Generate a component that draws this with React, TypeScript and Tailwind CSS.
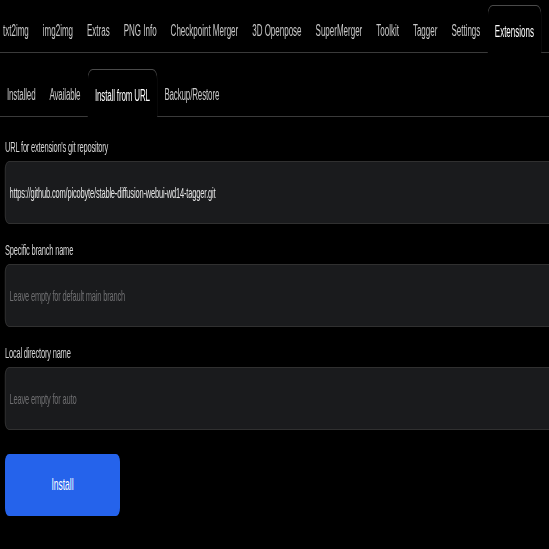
import { useState } from "react";

const TOP_TABS = ["txt2img", "img2img", "Extras", "PNG Info", "Checkpoint Merger", "3D Openpose", "SuperMerger", "Toolkit", "Tagger", "Settings", "Extensions"];
const SUB_TABS = ["Installed", "Available", "Install from URL", "Backup/Restore"];

const TabBar = ({ tabs, active, onPick, className, text }: { tabs: string[]; active: string; onPick: (t: string) => void; className?: string; text: string }) => (
  <div className={`flex border-b border-[#3a3a3a] ${className ?? ""}`}>
    {tabs.map((t) =>
      t === active ? (
        <button key={t} onClick={() => onPick(t)} className={`-mb-px px-[14px] h-[48px] pt-[4px] rounded-t-[10px] border border-b-0 border-[#4a4a4a] bg-black text-white leading-5 whitespace-nowrap ${text}`}>
          {t}
        </button>
      ) : (
        <button key={t} onClick={() => onPick(t)} className={`px-[14px] h-[47px] pt-[4px] text-[#c8c8c8] leading-5 whitespace-nowrap ${text}`}>
          {t}
        </button>
      )
    )}
  </div>
);

const Field = ({ label, value, placeholder }: { label: string; value?: string; placeholder: string }) => (
  <label className="block">
    <span className="block px-[10px] mb-1 text-[15px] tracking-[-0.4px] leading-5 text-[#d4d4d4]">{label}</span>
    <input
      defaultValue={value}
      placeholder={placeholder}
      className="block ml-[10px] w-[1130px] h-[63px] px-2 rounded-lg border border-[#3c3c3c] bg-[#1a1b1d] text-[15px] tracking-[-0.35px] text-[#e4e4e4] placeholder:text-[#6e6e70] outline-none"
    />
  </label>
);

export default function App() {
  const [top, setTop] = useState("Extensions");
  const [sub, setSub] = useState("Install from URL");

  return (
    <div className="w-[549px] h-[549px] overflow-hidden bg-black">
      <div className="w-[1140px] origin-top-left scale-x-50 font-['Liberation_Sans',Arial,sans-serif]">
        <TabBar tabs={TOP_TABS} active={top} onPick={setTop} text="text-[16px]" className="pt-[5px] -ml-[8px]" />
        <div className="pt-4">
          <TabBar tabs={SUB_TABS} active={sub} onPick={setSub} text="text-[16px] tracking-[-0.3px]" />
          <div className="flex flex-col gap-4 pt-5">
            <Field label="URL for extension's git repository" value="https://github.com/picobyte/stable-diffusion-webui-wd14-tagger.git" placeholder="" />
            <Field label="Specific branch name" placeholder="Leave empty for default main branch" />
            <Field label="Local directory name" placeholder="Leave empty for auto" />
            <button className="mt-2 ml-[10px] w-[230px] h-[62px] rounded-lg bg-[#2563eb] text-white text-[17px] font-medium">Install</button>
          </div>
        </div>
      </div>
    </div>
  );
}
